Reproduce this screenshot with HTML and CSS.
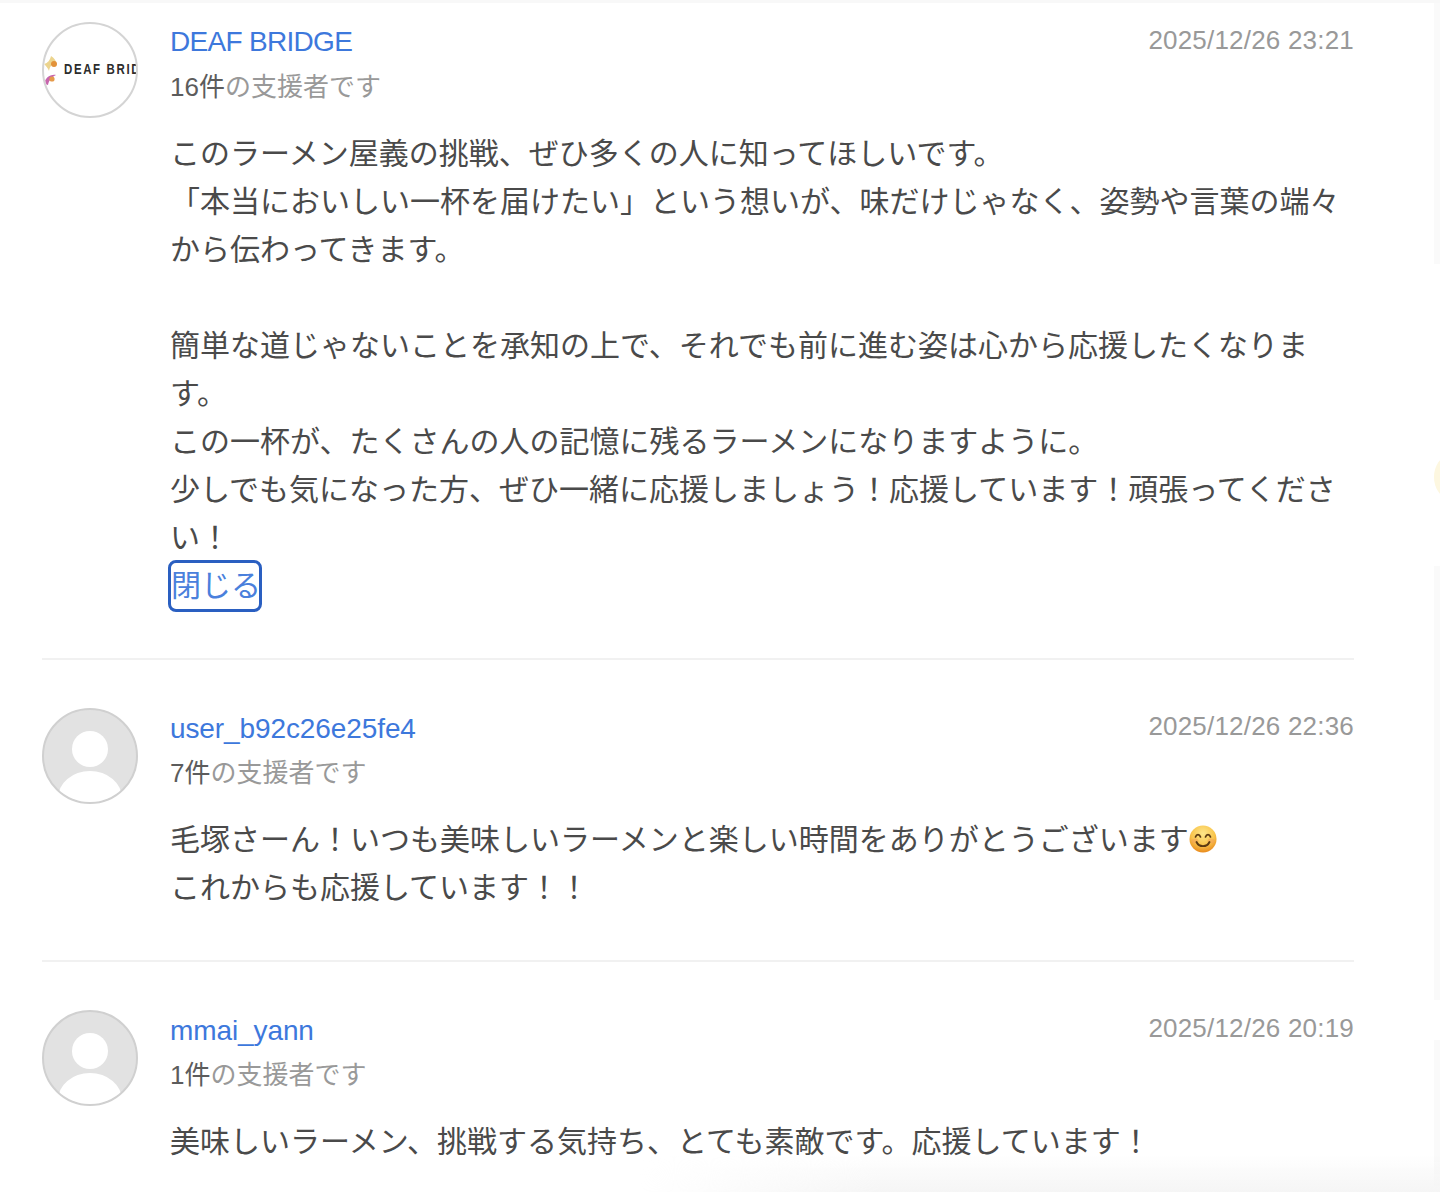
FILE: index.html
```html
<!DOCTYPE html>
<html lang="ja">
<head>
    <meta charset="UTF-8">
    <meta name="viewport" content="width=device-width, initial-scale=1.0">
    <title>応援コメント</title>
    <link rel="stylesheet" href="styles.css">
</head>
<body>
    <div class="top-band"></div>
    <div class="comments">
        <div class="comment comment-first">
            <svg class="avatar" viewBox="0 0 96 96">
                <defs><clipPath id="logoClip"><circle cx="48" cy="48" r="46"></circle></clipPath></defs>
                <circle cx="48" cy="48" r="47" fill="#fff" stroke="#d4d4d4" stroke-width="2"></circle>
                <g clip-path="url(#logoClip)">
                    <path d="M2 42c4-1 6-4 7-8c3 2 5 4 5 7c-4 1-6 3-7 8c-1-3-3-5-5-7z" fill="#ecd48e"></path>
                    <circle cx="12" cy="42" r="3" fill="#e2923a"></circle>
                    <path d="M2 62c1-6 6-10 12-9c-4 2-7 5-8 10z" fill="#c766ad"></path>
                    <circle cx="10" cy="57" r="2.600" fill="#e59a4a"></circle>
                    <text class="logo-text" x="22" y="52" textLength="97" lengthAdjust="spacingAndGlyphs">DEAF BRIDGE</text>
                </g>
            </svg>
            <div class="comment-body">
                <div class="comment-head">
                    <a class="name name-caps" href="#">DEAF BRIDGE</a>
                    <span class="date">2025/12/26 23:21</span>
                </div>
                <p class="supporter"><span class="count">16件</span>の支援者です</p>
                <p class="message">このラーメン屋義の挑戦、ぜひ多くの人に知ってほしいです。<br>「本当においしい一杯を届けたい」という想いが、味だけじゃなく、姿勢や言葉の端々から伝わってきます。<br><br>簡単な道じゃないことを承知の上で、それでも前に進む姿は心から応援したくなります。<br>この一杯が、たくさんの人の記憶に残るラーメンになりますように。<br>少しでも気になった方、ぜひ一緒に応援しましょう！応援しています！頑張ってください！</p>
                <a class="toggle" href="#">閉じる</a>
            </div>
        </div>
        <div class="comment">
            <svg class="avatar" viewBox="0 0 96 96">
                <use href="#defaultUser"></use>
            </svg>
            <div class="comment-body">
                <div class="comment-head">
                    <a class="name" href="#">user_b92c26e25fe4</a>
                    <span class="date">2025/12/26 22:36</span>
                </div>
                <p class="supporter"><span class="count">7件</span>の支援者です</p>
                <p class="message">毛塚さーん！いつも美味しいラーメンと楽しい時間をありがとうございます<svg class="emoji" viewBox="0 0 28 28">
                    <defs><radialGradient id="emojiFace" cx="50%" cy="30%" r="70%"><stop offset="0" stop-color="#fde68a"></stop><stop offset="0.6" stop-color="#f9c64e"></stop><stop offset="1" stop-color="#e98a1c"></stop></radialGradient></defs>
                    <circle cx="14" cy="14" r="13.500" fill="url(#emojiFace)"></circle>
                    <ellipse cx="6" cy="16" rx="3.500" ry="2.500" fill="#f4a05a" opacity="0.55"></ellipse>
                    <ellipse cx="22" cy="16" rx="3.500" ry="2.500" fill="#f4a05a" opacity="0.55"></ellipse>
                    <path d="M6.500 12c1-3.200 4-3.200 5 0M16.500 12c1-3.200 4-3.200 5 0" fill="none" stroke="#5b3a12" stroke-width="1.700" stroke-linecap="round"></path>
                    <path d="M7.500 17c2.500 5.500 10.500 5.500 13 0" fill="none" stroke="#5b3a12" stroke-width="1.900" stroke-linecap="round"></path>
                </svg><br>これからも応援しています！！</p>
            </div>
        </div>
        <div class="comment comment-last">
            <svg class="avatar" viewBox="0 0 96 96">
                <defs>
                    <g id="defaultUser">
                        <clipPath id="userClip"><circle cx="48" cy="48" r="46"></circle></clipPath>
                        <circle cx="48" cy="48" r="47" fill="#e2e2e2" stroke="#d0d0d0" stroke-width="2"></circle>
                        <g clip-path="url(#userClip)" fill="#fff">
                            <circle cx="48" cy="41" r="18"></circle>
                            <ellipse cx="48" cy="90" rx="32" ry="27"></ellipse>
                        </g>
                    </g>
                </defs>
                <use href="#defaultUser"></use>
            </svg>
            <div class="comment-body">
                <div class="comment-head">
                    <a class="name" href="#">mmai_yann</a>
                    <span class="date">2025/12/26 20:19</span>
                </div>
                <p class="supporter"><span class="count">1件</span>の支援者です</p>
                <p class="message">美味しいラーメン、挑戦する気持ち、とても素敵です。応援しています！</p>
            </div>
        </div>
    </div>
    <div class="side-panel side-panel-top"></div>
    <div class="side-glow"></div>
    <div class="side-panel side-panel-mid"></div>
    <div class="side-panel side-panel-low"></div>
    <div class="bottom-fade"></div>
</body>
</html>
```

FILE: styles.css
```css
body {
    font-family: "Liberation Sans", "Noto Sans CJK JP", sans-serif;
    margin: 0;
    padding: 0;
    height: 1192px;
    overflow: hidden;
    background-color: #fff;
    color: #4a4a4a;
    position: relative;
}
.top-band {
    height: 3px;
    background: #f8f8f8;
}
.comments {
    margin-left: 42px;
    width: 1312px;
}
.comment {
    display: flex;
    gap: 32px;
    padding: 48px 0 48px;
    border-bottom: 2px solid #f1f1f1;
}
.comment-first {
    padding-top: 19px;
}
.comment-last {
    border-bottom: none;
}
.avatar {
    width: 96px;
    height: 96px;
    flex: none;
    display: block;
}
.logo-text {
    font-family: "Liberation Sans", sans-serif;
    font-size: 14px;
    font-weight: bold;
    letter-spacing: 2px;
    fill: #2c2c2c;
}
.comment-body {
    flex: 1;
    min-width: 0;
    padding-top: 1px;
}
.comment-head {
    display: flex;
    justify-content: space-between;
    align-items: flex-start;
}
.name {
    font-size: 28px;
    line-height: 40px;
    color: #3d78dc;
    text-decoration: none;
    letter-spacing: -0.1px;
}
.name-caps {
    line-height: 38px;
    margin-bottom: 2px;
    letter-spacing: -0.7px;
}
.date {
    font-size: 26px;
    line-height: 34px;
    letter-spacing: 0.2px;
    color: #999;
}
.supporter {
    margin: 4px 0 0;
    font-size: 26px;
    line-height: 40px;
    color: #999;
}
.count {
    color: #5c5c5c;
}
.message {
    margin: 23px 0 0;
    font-size: 30px;
    line-height: 48px;
    color: #4a4a4a;
}
.emoji {
    width: 28px;
    height: 28px;
    vertical-align: -3px;
}
.toggle {
    display: block;
    box-sizing: border-box;
    width: 88px;
    height: 46px;
    margin: 1px 0 1px 1px;
    font-size: 30px;
    line-height: 46px;
    white-space: nowrap;
    color: #4a80dc;
    text-decoration: none;
    outline: 3px solid #2a5fc1;
    border-radius: 5px;
}
.side-panel {
    position: absolute;
    right: 0;
    width: 6px;
    background: #fafafa;
}
.side-panel-top {
    top: 3px;
    height: 261px;
}
.side-panel-mid {
    top: 566px;
    height: 434px;
}
.side-panel-low {
    top: 1040px;
    height: 152px;
}
.side-glow {
    position: absolute;
    right: -24px;
    top: 456px;
    width: 30px;
    height: 42px;
    border-radius: 50%;
    background: #fdf7e0;
}
.bottom-fade {
    position: absolute;
    left: 640px;
    right: 0;
    bottom: 0;
    height: 36px;
    background: linear-gradient(to bottom, rgba(245, 245, 245, 0), #f5f5f5);
    -webkit-mask-image: linear-gradient(to right, transparent, #000 30%);
    mask-image: linear-gradient(to right, transparent, #000 30%);
}
```
